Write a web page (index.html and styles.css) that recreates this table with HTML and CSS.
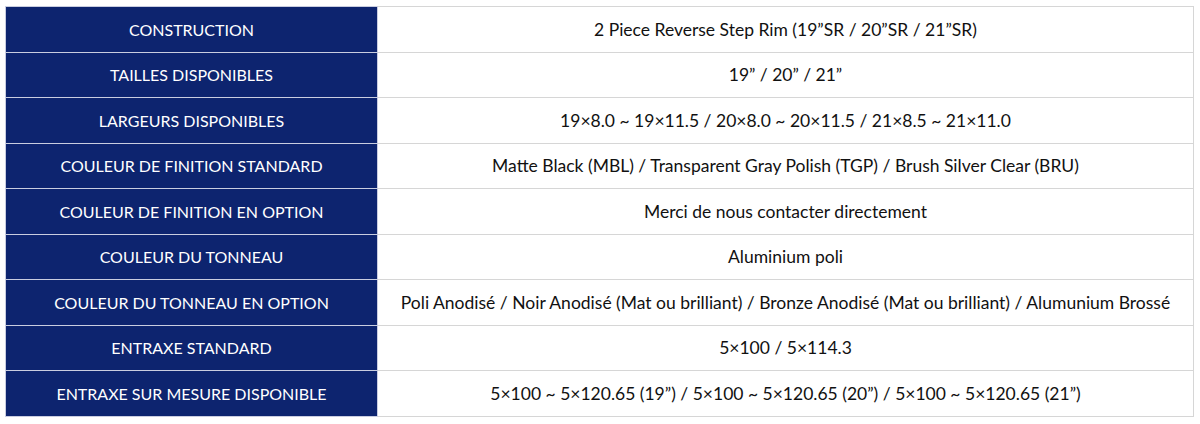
FILE: index.html
```html
<!DOCTYPE html>
<html lang="fr">
<head>
<meta charset="utf-8">
<link rel="stylesheet" href="styles.css">
</head>
<body>
<table class="specs">
  <tbody>
    <tr><th>CONSTRUCTION</th><td>2 Piece Reverse Step Rim (19”SR / 20”SR / 21”SR)</td></tr>
    <tr><th>TAILLES DISPONIBLES</th><td>19” / 20” / 21”</td></tr>
    <tr><th>LARGEURS DISPONIBLES</th><td>19×8.0 ~ 19×11.5 / 20×8.0 ~ 20×11.5 / 21×8.5 ~ 21×11.0</td></tr>
    <tr><th>COULEUR DE FINITION STANDARD</th><td>Matte Black (MBL) / Transparent Gray Polish (TGP) / Brush Silver Clear (BRU)</td></tr>
    <tr><th>COULEUR DE FINITION EN OPTION</th><td>Merci de nous contacter directement</td></tr>
    <tr><th>COULEUR DU TONNEAU</th><td>Aluminium poli</td></tr>
    <tr><th>COULEUR DU TONNEAU EN OPTION</th><td>Poli Anodisé / Noir Anodisé (Mat ou brilliant) / Bronze Anodisé (Mat ou brilliant) / Alumunium Brossé</td></tr>
    <tr><th>ENTRAXE STANDARD</th><td>5×100 / 5×114.3</td></tr>
    <tr><th>ENTRAXE SUR MESURE DISPONIBLE</th><td>5×100 ~ 5×120.65 (19”) / 5×100 ~ 5×120.65 (20”) / 5×100 ~ 5×120.65 (21”)</td></tr>
  </tbody>
</table>
</body>
</html>
```
FILE: styles.css
```css
html, body {
  margin: 0;
  padding: 0;
  background: #ffffff;
}
body {
  padding: 6px 0 0 5px;
}
.specs {
  border-collapse: collapse;
  width: 1189px;
  font-family: Lato, "Open Sans", sans-serif;
  table-layout: fixed;
}
.specs th,
.specs td {
  height: 44.5px;
  padding: 0;
  border: 1px solid #d6d6d6;
  text-align: center;
  vertical-align: middle;
}
.specs th {
  width: 371px;
  background: #0d246f;
  color: #ffffff;
  font-size: 16px;
  font-weight: 400;
  border-color: #c9cde0;
}
.specs td {
  color: #111111;
  font-size: 17.5px;
}
```
